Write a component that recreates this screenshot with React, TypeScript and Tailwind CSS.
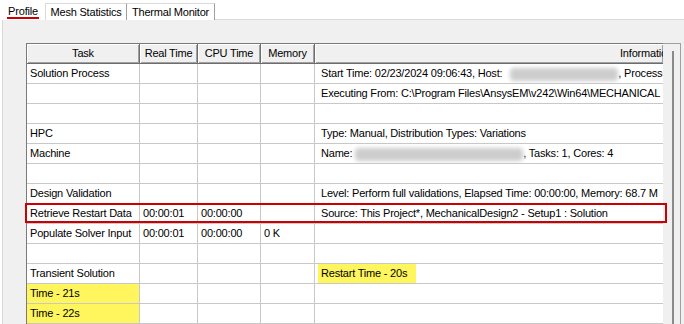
import React from "react";

const Blur = ({ w }: { w: number }) => (
  <span
    className="inline-block h-[13px] align-middle bg-[#cdcdcd] blur-[2px] rounded-sm"
    style={{ width: w }}
  />
);

type Row = {
  task?: string;
  real?: string;
  cpu?: string;
  mem?: string;
  info?: React.ReactNode;
  taskYellow?: boolean;
  infoYellow?: boolean;
};

const rows: Row[] = [
  {
    task: "Solution Process",
    info: (
      <>
        Start Time: 02/23/2024 09:06:43, Host:<span className="ml-[8px]" />
        <Blur w={108} />, Processor
      </>
    ),
  },
  { info: "Executing From: C:\\Program Files\\AnsysEM\\v242\\Win64\\MECHANICAL" },
  {},
  { task: "HPC", info: "Type: Manual, Distribution Types: Variations" },
  {
    task: "Machine",
    info: (
      <>
        Name: <Blur w={168} />, Tasks: 1, Cores: 4
      </>
    ),
  },
  {},
  {
    task: "Design Validation",
    info: "Level: Perform full validations, Elapsed Time: 00:00:00, Memory: 68.7 M",
  },
  {
    task: "Retrieve Restart Data",
    real: "00:00:01",
    cpu: "00:00:00",
    info: "Source: This Project*, MechanicalDesign2 - Setup1 : Solution",
  },
  { task: "Populate Solver Input", real: "00:00:01", cpu: "00:00:00", mem: "0 K" },
  {},
  { task: "Transient Solution", info: "Restart Time - 20s", infoYellow: true },
  { task: "Time - 21s", taskYellow: true },
  { task: "Time - 22s", taskYellow: true },
];

const cell =
  "h-[20px] border-r border-b border-[#c8c8c8] px-[3px] leading-[19px] whitespace-nowrap overflow-hidden";

const head =
  "h-[20px] bg-[#f0f0f0] border-r border-b border-[#6d6d6d] shadow-[inset_1px_1px_0_#ffffff,inset_-1px_-1px_0_#a0a0a0] leading-[18px] whitespace-nowrap overflow-hidden text-center";

export default function App() {
  return (
    <div
      className="w-[684px] h-[324px] overflow-hidden bg-white text-[11px] tracking-[-0.2px] text-black flex flex-col"
      style={{ fontFamily: '"Liberation Sans", Arial, sans-serif' }}
    >
      {/* Tabs */}
      <div className="flex h-[20px] items-end shrink-0 bg-white">
        <div className="relative w-[45px] h-[20px] flex items-start justify-center pt-[3px] pl-[1px]">
          <span>Profile</span>
          <div className="absolute left-[7px] top-[17px] w-[32px] h-[2px] bg-[#cc0000]" />
        </div>
        <div className="w-[82px] h-[17px] border-l border-t border-r border-[#d9d9d9] border-r-[#a0a0a0] flex items-center justify-center">
          Mesh Statistics
        </div>
        <div className="w-[88px] h-[17px] border-t border-r border-[#d9d9d9] border-r-[#a0a0a0] flex items-center justify-center">
          Thermal Monitor
        </div>
        <div className="flex-1 h-[20px] border-b border-[#d9d9d9]" />
      </div>

      {/* Panel */}
      <div className="flex-1 bg-[#f0f0f0] ml-[2px] border-l border-[#d9d9d9] pt-[23px] pl-[23px] flex min-h-0">
        <div className="relative w-[637px] bg-white border-l border-t border-[#7a7a7a] self-start">
          <div className="grid grid-cols-[113px_58px_63px_54px_348px]">
            <div className={head}>Task</div>
            <div className={head}>Real Time</div>
            <div className={head}>CPU Time</div>
            <div className={head}>Memory</div>
            <div className={head + " text-left pl-[305px] border-r-0"}>Information</div>
            {rows.map((r, i) => (
              <React.Fragment key={i}>
                <div className={cell + (r.taskYellow ? " bg-[#fff55c]" : "")}>{r.task}</div>
                <div className={cell}>{r.real}</div>
                <div className={cell}>{r.cpu}</div>
                <div className={cell}>{r.mem}</div>
                <div className={cell + " border-r-0 px-0"}>
                  {r.infoYellow ? (
                    <span className="inline-block h-[19px] w-[98px] bg-[#fff55c] px-[3px]">{r.info}</span>
                  ) : (
                    <span className="pl-[3px]">{r.info}</span>
                  )}
                </div>
              </React.Fragment>
            ))}
          </div>
          {/* red highlight box */}
          <div className="absolute left-[-2px] top-[159px] w-[642px] h-[20px] border-2 border-[#cc0000] pointer-events-none" />
        </div>
        {/* right frame / scrollbar */}
        <div className="flex-1 relative">
          <div className="absolute left-0 top-0 w-[18px] h-[300px] border-t border-r border-[#a0a0a0]" />
          <div className="absolute left-[9px] top-[8px] w-[2px] h-[300px] bg-[#8a8a8a]" />
        </div>
      </div>
    </div>
  );
}
